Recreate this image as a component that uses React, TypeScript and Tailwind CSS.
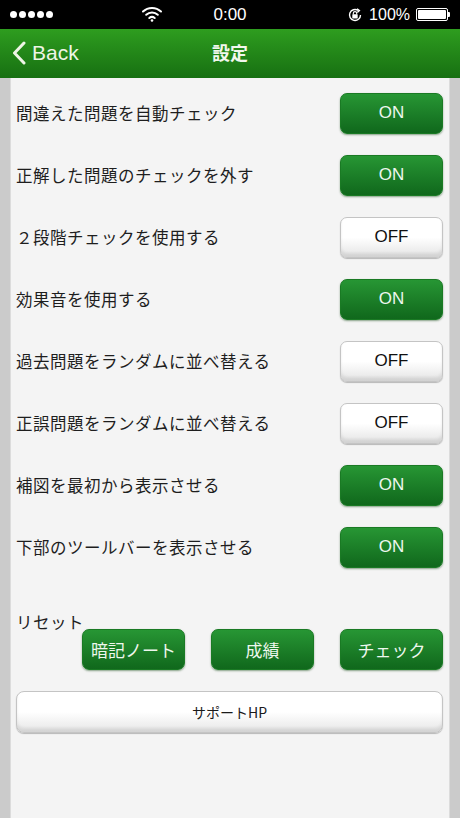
import React from "react";

const JP = { fontFamily: '"Noto Sans CJK JP", "Noto Sans", sans-serif' };
const LAT = { fontFamily: '"Liberation Sans", "Noto Sans CJK JP", sans-serif' };

function OnOff({ on }: { on: boolean }) {
  if (on) {
    return (
      <div
        className="w-[103px] h-[41px] rounded-[7px] flex items-center justify-center text-[17px] text-[#eef7ee] bg-gradient-to-b from-[#279634] to-[#10681c] shadow-[0_1px_2px_rgba(0,60,0,0.45)] border border-[#1a7a24]"
        style={LAT}
      >
        ON
      </div>
    );
  }
  return (
    <div
      className="w-[103px] h-[41px] rounded-[7px] flex items-center justify-center text-[17px] text-[#111] bg-gradient-to-b from-white via-white to-[#e4e4e4] border border-[#c4c4c4] shadow-[0_1px_1px_rgba(0,0,0,0.25),inset_0_-4px_3px_rgba(0,0,0,0.08)]"
      style={LAT}
    >
      OFF
    </div>
  );
}

function GreenBtn({ label }: { label: string }) {
  return (
    <div
      className="w-[103px] h-[41px] rounded-[7px] flex items-center justify-center text-[17px] text-[#eef7ee] bg-gradient-to-b from-[#279634] to-[#10681c] shadow-[0_1px_2px_rgba(0,60,0,0.45)] border border-[#1a7a24]"
      style={JP}
    >
      {label}
    </div>
  );
}

const rows: [string, boolean][] = [
  ["間違えた問題を自動チェック", true],
  ["正解した問題のチェックを外す", true],
  ["２段階チェックを使用する", false],
  ["効果音を使用する", true],
  ["過去問題をランダムに並べ替える", false],
  ["正誤問題をランダムに並べ替える", false],
  ["補図を最初から表示させる", true],
  ["下部のツールバーを表示させる", true],
];

export default function App() {
  return (
    <div className="w-[460px] h-[818px] overflow-hidden flex flex-col bg-[#cbcbcb]">
      {/* status bar */}
      <div className="h-[29px] bg-black flex items-center px-[10px] text-white relative" style={LAT}>
        <div className="flex gap-[2px]">
          {[0, 1, 2, 3, 4].map((i) => (
            <div key={i} className="w-[7px] h-[7px] rounded-full bg-white" />
          ))}
        </div>
        <svg className="absolute left-[142px] top-[6px]" width="20" height="16" viewBox="0 0 20 16">
          <path d="M1 5.5 A13 13 0 0 1 19 5.5" stroke="white" strokeWidth="2" fill="none" strokeLinecap="round" />
          <path d="M4.2 8.8 A8.5 8.5 0 0 1 15.8 8.8" stroke="white" strokeWidth="2" fill="none" strokeLinecap="round" />
          <path d="M7.3 12 A4.2 4.2 0 0 1 12.7 12" stroke="white" strokeWidth="2" fill="none" strokeLinecap="round" />
          <circle cx="10" cy="14.5" r="1.3" fill="white" />
        </svg>
        <div className="absolute left-0 right-0 top-0 h-[29px] flex items-center justify-center text-[17px] font-medium">0:00</div>
        <div className="ml-auto flex items-center gap-[6px]">
          <svg width="16" height="16" viewBox="0 0 16 16">
            <path d="M13.5 8 A5.5 5.5 0 1 1 11 3.4" stroke="white" strokeWidth="1.4" fill="none" />
            <path d="M10 1.8 L12.4 3.6 L10.3 5.6" stroke="white" strokeWidth="1.4" fill="none" />
            <rect x="5.3" y="7.3" width="5.4" height="4.2" rx="0.6" fill="white" />
            <path d="M6.3 7.5 V6.3 A1.7 1.7 0 0 1 9.7 6.3 V7.5" stroke="white" strokeWidth="1.1" fill="none" />
          </svg>
          <span className="text-[16px]">100%</span>
          <div className="flex items-center">
            <div className="w-[32px] h-[13px] border border-white rounded-[2px] p-[1px]">
              <div className="w-full h-full bg-white rounded-[1px]" />
            </div>
            <div className="w-[2px] h-[5px] bg-white rounded-r-[1px]" />
          </div>
        </div>
      </div>
      {/* nav bar */}
      <div className="h-[49px] bg-gradient-to-b from-[#2e9d1f] to-[#177012] flex items-center relative pb-[2px]">
        <div className="flex items-center pl-[12px] gap-[6px]">
          <svg width="14" height="24" viewBox="0 0 14 24">
            <path d="M12 2 L2.5 12 L12 22" stroke="#eef5e6" strokeWidth="3" fill="none" strokeLinecap="round" strokeLinejoin="round" />
          </svg>
          <span className="text-[21px] text-[#eef5e6]" style={LAT}>Back</span>
        </div>
        <div className="absolute inset-0 pb-[3px] flex items-center justify-center text-[18px] font-bold text-[#f2f7ee]" style={JP}>
          設定
        </div>
      </div>
      {/* content */}
      <div className="flex-1 mx-[10px] bg-[#f4f4f4] border-x border-[#dcdcdc] flex flex-col pt-[4px] pl-[5px] pr-[6px]">
        {rows.map(([label, on]) => (
          <div key={label} className="h-[62px] flex items-center justify-between">
            <span className="text-[16.5px] text-[#1e1e1e] tracking-[0.5px]" style={JP}>{label}</span>
            <OnOff on={on} />
          </div>
        ))}
        <div className="mt-[34px] text-[16.5px] text-[#1e1e1e] leading-[20px] tracking-[0.5px]" style={JP}>リセット</div>
        <div className="flex justify-end gap-[26px] mt-[-3px]">
          <GreenBtn label="暗記ノート" />
          <GreenBtn label="成績" />
          <GreenBtn label="チェック" />
        </div>
        <div
          className="mt-[21px] h-[42px] rounded-[8px] flex items-center justify-center text-[14px] text-[#1a1a1a] bg-gradient-to-b from-white via-white to-[#e6e6e6] border border-[#c4c4c4] shadow-[0_1px_1px_rgba(0,0,0,0.25),inset_0_-4px_3px_rgba(0,0,0,0.08)]"
          style={JP}
        >
          サポートHP
        </div>
      </div>
    </div>
  );
}
